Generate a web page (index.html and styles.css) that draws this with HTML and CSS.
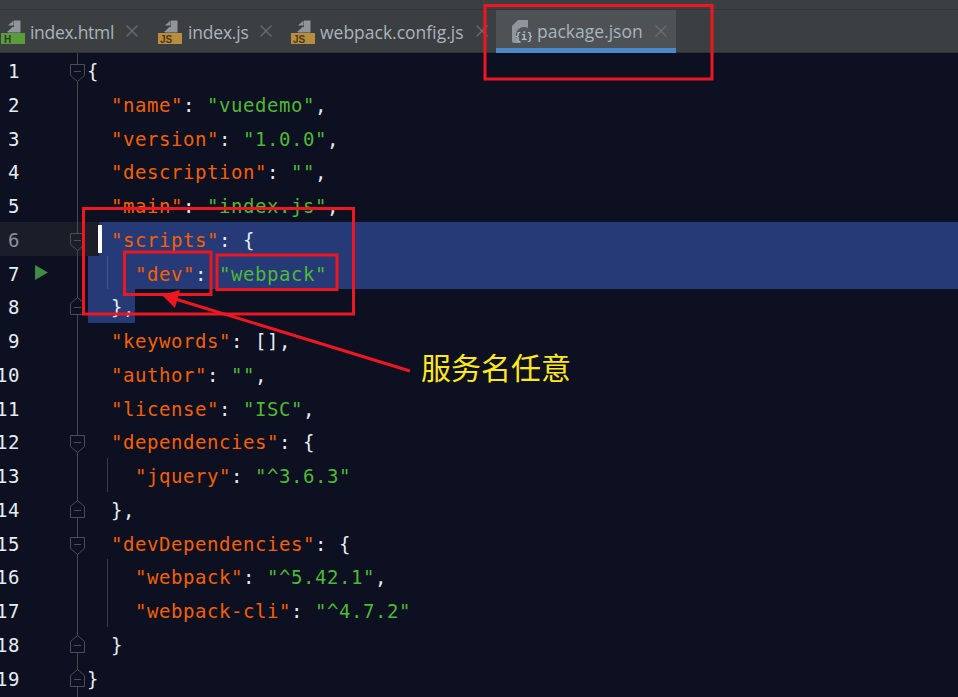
FILE: index.html
```html
<!DOCTYPE html>
<html lang="zh">
<head>
<meta charset="utf-8">
<title>package.json</title>
<link rel="stylesheet" href="styles.css">
</head>
<body>
<svg width="0" height="0" class="defs">
  <defs>
    <symbol id="doc" viewBox="0 0 24 24">
      <path d="M6 12 L12 6.5 V12 Z M13 0.5 H19.5 V12.5 H6.5 L13 6.5 Z" fill="#8f959b"/>
      <path d="M7 5.5 L12.5 0.5 V5.5 Z" fill="#8f959b"/>
    </symbol>
    <symbol id="close" viewBox="0 0 12 12">
      <path d="M0.5 0.5 L11.5 11.5 M11.5 0.5 L0.5 11.5" stroke="#6a6e71" stroke-width="1.3" fill="none"/>
    </symbol>
    <symbol id="fold-open" viewBox="0 0 15 18">
      <path d="M0.5 0.5 H14.5 V11.5 L7.5 17.5 L0.5 11.5 Z" stroke="#4c4d52" fill="currentColor"/>
      <path d="M4 7.5 H11" stroke="#4c4d52"/>
    </symbol>
    <symbol id="fold-close" viewBox="0 0 15 18">
      <path d="M0.5 17.5 H14.5 V6.5 L7.5 0.5 L0.5 6.5 Z" stroke="#4c4d52" fill="currentColor"/>
      <path d="M4 10.5 H11" stroke="#4c4d52"/>
    </symbol>
  </defs>
</svg>

<div class="window">
  <div class="topstrip"></div>
  <nav class="tabs">
    <div class="tab tab-html">
      <svg class="ficon" viewBox="0 0 24 24"><use href="#doc"/><rect x="0" y="13" width="24" height="11" fill="#5a9b3d"/><text x="3" y="23" class="badge">H</text></svg>
      <span>index.html</span><svg class="x"><use href="#close"/></svg>
    </div>
    <div class="tab tab-js">
      <svg class="ficon" viewBox="0 0 24 24"><use href="#doc"/><rect x="0" y="13" width="24" height="11" fill="#b98d3e"/><text x="2" y="23" class="badge">JS</text></svg>
      <span>index.js</span><svg class="x"><use href="#close"/></svg>
    </div>
    <div class="tab tab-wp">
      <svg class="ficon" viewBox="0 0 24 24"><use href="#doc"/><rect x="0" y="13" width="24" height="11" fill="#b98d3e"/><text x="2" y="23" class="badge">JS</text></svg>
      <span>webpack.config.js</span><svg class="x"><use href="#close"/></svg>
    </div>
    <div class="tab tab-active">
      <svg class="jicon" viewBox="0 0 20 23">
        <path d="M6 0 H16 V11 H0 V6 Z" fill="#8f959b"/>
        <path d="M0 11 H9 V23 H2 Q0 23 0 21 Z" fill="#8f959b"/>
        <circle cx="12" cy="15" r="8" fill="#50565a"/>
        <text x="12" y="19.5" class="jtext">{i}</text>
      </svg>
      <span>package.json</span><svg class="x"><use href="#close"/></svg>
    </div>
  </nav>

  <main class="editor">
    <div class="line"><div class="num">1</div><div class="fold"><svg class="fm"><use href="#fold-open"/></svg></div><div class="code">{</div></div>
    <div class="line"><div class="num">2</div><div class="fold"></div><div class="code">  <b>"name"</b>: <em>"vuedemo"</em>,</div></div>
    <div class="line"><div class="num">3</div><div class="fold"></div><div class="code">  <b>"version"</b>: <em>"1.0.0"</em>,</div></div>
    <div class="line"><div class="num">4</div><div class="fold"></div><div class="code">  <b>"description"</b>: <em>""</em>,</div></div>
    <div class="line"><div class="num">5</div><div class="fold"></div><div class="code">  <b>"main"</b>: <em>"index.js"</em>,</div></div>
    <div class="line current"><div class="num">6</div><div class="fold"><svg class="fm"><use href="#fold-open"/></svg></div><div class="code sel-caret"><b>"scripts"</b>: {</div></div>
    <div class="line"><div class="num">7<svg class="run" viewBox="0 0 12 14"><path d="M0 0 L12 7 L0 14 Z"/></svg></div><div class="fold"></div><div class="code sel guide">    <b>"dev"</b>: <em>"webpack"</em></div></div>
    <div class="line"><div class="num">8</div><div class="fold"><svg class="fm fm-up"><use href="#fold-close"/></svg></div><div class="code sel-part">  },</div></div>
    <div class="line"><div class="num">9</div><div class="fold"></div><div class="code">  <b>"keywords"</b>: [],</div></div>
    <div class="line"><div class="num">10</div><div class="fold"></div><div class="code">  <b>"author"</b>: <em>""</em>,</div></div>
    <div class="line"><div class="num">11</div><div class="fold"></div><div class="code">  <b>"license"</b>: <em>"ISC"</em>,</div></div>
    <div class="line"><div class="num">12</div><div class="fold"><svg class="fm"><use href="#fold-open"/></svg></div><div class="code">  <b>"dependencies"</b>: {</div></div>
    <div class="line"><div class="num">13</div><div class="fold"></div><div class="code guide">    <b>"jquery"</b>: <em>"^3.6.3"</em></div></div>
    <div class="line"><div class="num">14</div><div class="fold"><svg class="fm fm-up"><use href="#fold-close"/></svg></div><div class="code">  },</div></div>
    <div class="line"><div class="num">15</div><div class="fold"><svg class="fm"><use href="#fold-open"/></svg></div><div class="code">  <b>"devDependencies"</b>: {</div></div>
    <div class="line"><div class="num">16</div><div class="fold"></div><div class="code guide">    <b>"webpack"</b>: <em>"^5.42.1"</em>,</div></div>
    <div class="line"><div class="num">17</div><div class="fold"></div><div class="code guide">    <b>"webpack-cli"</b>: <em>"^4.7.2"</em></div></div>
    <div class="line"><div class="num">18</div><div class="fold"><svg class="fm fm-up"><use href="#fold-close"/></svg></div><div class="code">  }</div></div>
    <div class="line"><div class="num">19</div><div class="fold"><svg class="fm fm-up"><use href="#fold-close"/></svg></div><div class="code">}</div></div>
    <div class="line"><div class="num"></div><div class="fold"></div><div class="code"></div></div>
  </main>
</div>

<svg class="marks" viewBox="0 0 958 697">
  <rect x="485" y="5.5" width="227" height="73.5"/>
  <rect x="83.5" y="208.5" width="270" height="105.5"/>
  <rect x="124.5" y="252" width="86.5" height="42.5"/>
  <rect x="217" y="255" width="120" height="34.5"/>
  <line x1="410" y1="371" x2="172" y2="298"/>
  <path class="head" d="M162 295 L180 290 L175 308 Z"/>
</svg>
<div class="note">服务名任意</div>
</body>
</html>
```
FILE: styles.css
```css
* { box-sizing: border-box; }
html, body { margin: 0; height: 100%; overflow: hidden; background: #0c1020; }
.defs { position: absolute; }
.window { width: 958px; height: 697px; display: flex; flex-direction: column; overflow: hidden; }

.topstrip { height: 10px; background: #3c3f41; border-bottom: 1px solid #323436; flex: none; }
.tabs {
  height: 43px; flex: none; display: flex; align-items: stretch;
  background: #3c3f41; border-bottom: 1px solid #2f3133;
  font: 17.5px "Open Sans", "Noto Sans", sans-serif; color: #a9b4bd;
}
.tab { display: flex; align-items: center; position: relative; }
.tab span { white-space: nowrap; padding-top: 1px; }
.tab-html { width: 158px; padding-left: 1px; padding-right: 20px; }
.tab-html span { letter-spacing: -0.3px; }
.tab-js { width: 133px; padding-right: 19px; }
.tab-js span { letter-spacing: -0.2px; }
.tab-wp { width: 205px; padding-right: 8px; }
.tab-active { width: 180px; padding-left: 16px; padding-right: 9px; background: #4e5254; height: 43px; border-bottom: 5px solid #4a88c7; }
.tab-active span { padding-top: 4px; }
.tab-active .x { margin-top: 4px; }
.ficon { width: 24px; height: 24px; margin: 1px 5px 0 0; flex: none; }
.tab-js .ficon { margin-right: 6px; }
.jicon { width: 20px; height: 23px; margin: 5px 5px 0 0; flex: none; }
.badge { font: bold 10px "Liberation Sans", sans-serif; fill: #2d3a22; }
.tab-js .badge, .tab-wp .badge { fill: #4a3a1a; }
.jtext { font: bold 10px "DejaVu Sans Mono", monospace; fill: #b4bac0; text-anchor: middle; }
.x { width: 12px; height: 12px; margin-left: auto; flex: none; }

.editor {
  flex: 1; min-height: 0;
  font: 19px/33.75px "DejaVu Sans Mono", monospace; letter-spacing: 0.56px; color: #e6ecf2;
}
.line { height: 33.75px; display: flex; position: relative; }
.num { width: 20px; margin-right: 50px; padding-top: 2px; display: flex; justify-content: flex-end; flex: none; color: #e6edf2; }
.num .run { position: absolute; left: 35px; top: 9px; width: 13px; height: 15px; fill: #3f8c45; }
.fold {
  width: 15px; flex: none; position: relative; color: #0c1020;
  background: linear-gradient(#47484d, #47484d) 7px 0 / 1px 100% no-repeat;
}
.fm { position: absolute; left: 0; top: 11px; width: 15px; height: 18px; }
.fm-up { top: 8px; }
.code { margin-left: 3px; padding-top: 2px; flex: 1; white-space: pre; text-indent: -1px; }
.code b { font-weight: normal; color: #f55f05; }
.code em { font-style: normal; color: #4fb836; }
.guide { background: linear-gradient(#3a3d45, #3a3d45) 19px 0 / 1px 100% no-repeat; }
.sel { background: linear-gradient(#4a5680, #4a5680) 19px 0 / 1px 100% no-repeat, #253a76; }
.sel-part { flex: none; width: 47px; background: #253a76; }

.current { background: #1b1d29; }
.current .num { color: #8b9099; }
.current .fold { color: #1b1d29; }
.sel-caret { margin-left: 14px; padding-left: 13px; background: #253a76; }
.sel-caret::before {
  content: ""; position: absolute; left: 98px; top: 3px; width: 4px; height: 28px; background: #fff;
}

.marks { position: absolute; left: 0; top: 0; width: 958px; height: 697px; pointer-events: none; }
.marks rect, .marks line { fill: none; stroke: #ee1620; stroke-width: 3; }
.marks .head { fill: #ee1620; }
.note {
  position: absolute; left: 421px; top: 344px;
  font: 30px/44px "Noto Sans CJK SC", sans-serif; color: #ffe81a; white-space: nowrap;
}
```
